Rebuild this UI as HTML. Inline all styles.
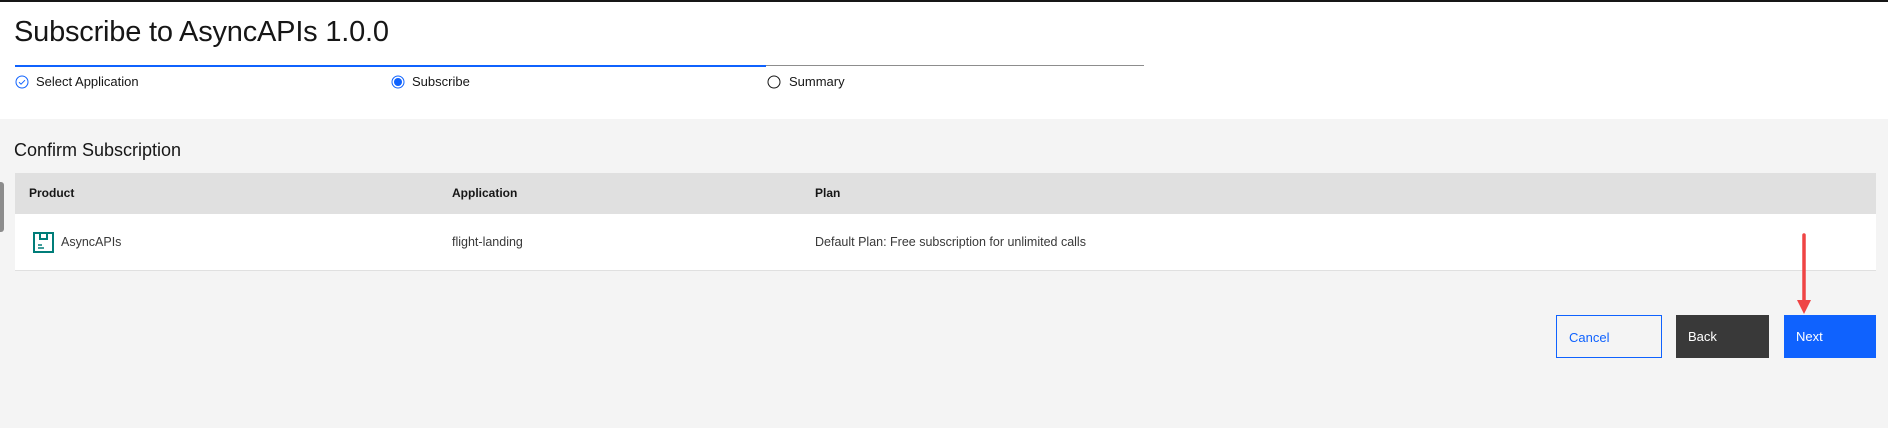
<!DOCTYPE html>
<html><head><style>
*{margin:0;padding:0;box-sizing:border-box}
body{width:1888px;height:428px;overflow:hidden;background:#f4f4f4;font-family:"Liberation Sans",sans-serif;color:#161616;position:relative}
.top{position:absolute;left:0;top:0;width:1888px;height:119px;background:#fff;border-top:2px solid #161616}
.a{position:absolute;white-space:nowrap}
</style></head><body>
<div class="top"></div>
<div class="a" style="left:14px;top:16px;font-size:29px;font-weight:300;letter-spacing:-0.2px">Subscribe to AsyncAPIs 1.0.0</div>
<div class="a" style="left:15px;top:65px;width:751px;height:2px;background:#0f62fe"></div>
<div class="a" style="left:766px;top:65px;width:378px;height:1px;background:#8d8d8d"></div>
<svg class="a" style="left:15px;top:75px" width="14" height="14" viewBox="0 0 14 14"><circle cx="7" cy="7" r="6" fill="none" stroke="#0f62fe" stroke-width="1"/><path d="M4 7.2l2 2 4-4" fill="none" stroke="#0f62fe" stroke-width="1"/></svg>
<div class="a" style="left:36px;top:74px;font-size:13px">Select Application</div>
<svg class="a" style="left:391px;top:75px" width="14" height="14" viewBox="0 0 14 14"><circle cx="7" cy="7" r="6" fill="none" stroke="#0f62fe" stroke-width="1"/><circle cx="7" cy="7" r="4" fill="#0f62fe"/></svg>
<div class="a" style="left:412px;top:74px;font-size:13px">Subscribe</div>
<svg class="a" style="left:767px;top:75px" width="14" height="14" viewBox="0 0 14 14"><circle cx="7" cy="7" r="6" fill="none" stroke="#161616" stroke-width="1"/></svg>
<div class="a" style="left:789px;top:74px;font-size:13px">Summary</div>
<div class="a" style="left:14px;top:140px;font-size:18px">Confirm Subscription</div>
<div class="a" style="left:0;top:182px;width:4px;height:50px;background:#8d8d8d;border-radius:0 3px 3px 0"></div>
<div class="a" style="left:15px;top:173px;width:1861px;height:41px;background:#e0e0e0"></div>
<div class="a" style="left:15px;top:214px;width:1861px;height:57px;background:#fff;border-bottom:1px solid #e0e0e0"></div>
<div class="a" style="left:29px;top:186px;font-size:12px;font-weight:bold">Product</div>
<div class="a" style="left:452px;top:186px;font-size:12px;font-weight:bold">Application</div>
<div class="a" style="left:815px;top:186px;font-size:12px;font-weight:bold">Plan</div>
<svg class="a" style="left:33px;top:232px" width="21" height="21" viewBox="0 0 21 21"><rect x="1" y="1" width="19" height="19" fill="none" stroke="#007d79" stroke-width="2"/><path d="M7 1v6h7V1" fill="none" stroke="#007d79" stroke-width="2"/><path d="M5 13h4M5 16h6" stroke="#007d79" stroke-width="1.5"/></svg>
<div class="a" style="left:61px;top:235px;font-size:12.5px;color:#393939">AsyncAPIs</div>
<div class="a" style="left:452px;top:235px;font-size:12.5px;color:#393939">flight-landing</div>
<div class="a" style="left:815px;top:235px;font-size:12.5px;color:#393939">Default Plan: Free subscription for unlimited calls</div>
<div class="a" style="left:1556px;top:315px;width:106px;height:43px;border:1px solid #0f62fe;color:#0f62fe;font-size:13px;padding:14px 0 0 12px">Cancel</div>
<div class="a" style="left:1676px;top:315px;width:93px;height:43px;background:#393939;color:#fff;font-size:13px;padding:14px 0 0 12px">Back</div>
<div class="a" style="left:1784px;top:315px;width:92px;height:43px;background:#0f62fe;color:#fff;font-size:13px;padding:14px 0 0 12px">Next</div>
<svg class="a" style="left:1795px;top:232px" width="18" height="86" viewBox="0 0 18 86"><path d="M9 3V70" stroke="#ef4444" stroke-width="3.5" stroke-linecap="round"/><path d="M2 68h14l-7 14z" fill="#ef4444"/></svg>
</body></html>
